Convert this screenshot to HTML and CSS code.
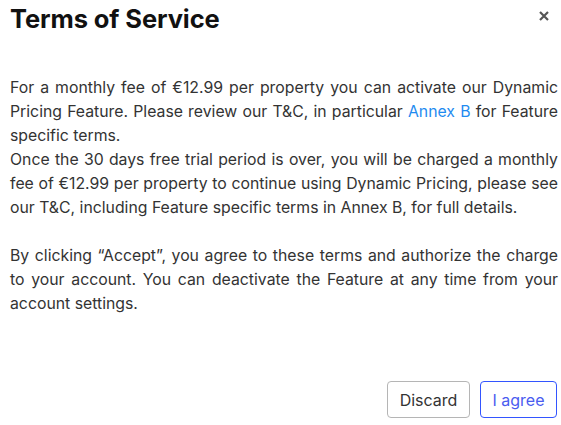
FILE: index.html
```html
<!DOCTYPE html>
<html>
<head>
<meta charset="utf-8">
<link rel="stylesheet" href="styles.css">
</head>
<body>
<div class="dialog">
  <div class="header">
    <h1 class="title">Terms of Service</h1>
    <button class="close" aria-label="Close">
      <svg width="10" height="10" viewBox="0 0 10 10"><path d="M1 1L9 9M9 1L1 9" stroke="#555" stroke-width="2.2" stroke-linecap="butt"/></svg>
    </button>
  </div>
  <div class="content">
    <p class="para">For a monthly fee of €12.99 per property you can activate our Dynamic Pricing Feature. Please review our T&amp;C, in particular <a class="link" href="#">Annex B</a> for Feature specific terms.<br>Once the 30 days free trial period is over, you will be charged a monthly fee of €12.99 per property to continue using Dynamic Pricing, please see our T&amp;C, including Feature specific terms in Annex B, for full details.</p>
    <p class="para">By clicking “Accept”, you agree to these terms and authorize the charge to your account. You can deactivate the Feature at any time from your account settings.</p>
  </div>
  <div class="footer">
    <button class="btn btn-discard">Discard</button>
    <button class="btn btn-agree">I agree</button>
  </div>
</div>
</body>
</html>
```
FILE: styles.css
```css
html, body {
  margin: 0;
  padding: 0;
  background: #fff;
}
.dialog {
  width: 561px;
  height: 425px;
  box-sizing: border-box;
  padding: 0 3px 7px 10px;
  display: flex;
  flex-direction: column;
  font-family: Inter, "Open Sans", sans-serif;
}
.header {
  display: flex;
  justify-content: space-between;
  align-items: flex-start;
  height: 37px;
}
.title {
  margin: 4px 0 0 0;
  font-size: 25.5px;
  line-height: 30px;
  font-weight: 700;
  color: #111;
  letter-spacing: -0.1px;
}
.close {
  border: none;
  background: none;
  padding: 0;
  width: 20px;
  height: 20px;
  margin: 6px 4px 0 0;
  display: flex;
  align-items: center;
  justify-content: center;
}
.content {
  padding: 39px 0 0 0;
  flex: 1;
}
.para {
  margin: 0 0 24px 0;
  font-size: 15.8px;
  line-height: 24px;
  color: #333;
  text-align: justify;
}
.link {
  color: #1f8bf0;
  text-decoration: none;
}
.footer {
  display: flex;
  justify-content: flex-end;
  gap: 10px;
  padding-right: 1px;
}
.btn {
  font-family: Inter, "Open Sans", sans-serif;
  font-size: 16px;
  height: 37px;
  padding: 0;
  border-radius: 4px;
  background: #fff;
  white-space: nowrap;
}
.btn-discard {
  width: 83px;
  border: 1px solid #b5b5b5;
  color: #333;
}
.btn-agree {
  width: 77px;
  border: 1px solid #3355ff;
  color: #4a5cf0;
}
```
